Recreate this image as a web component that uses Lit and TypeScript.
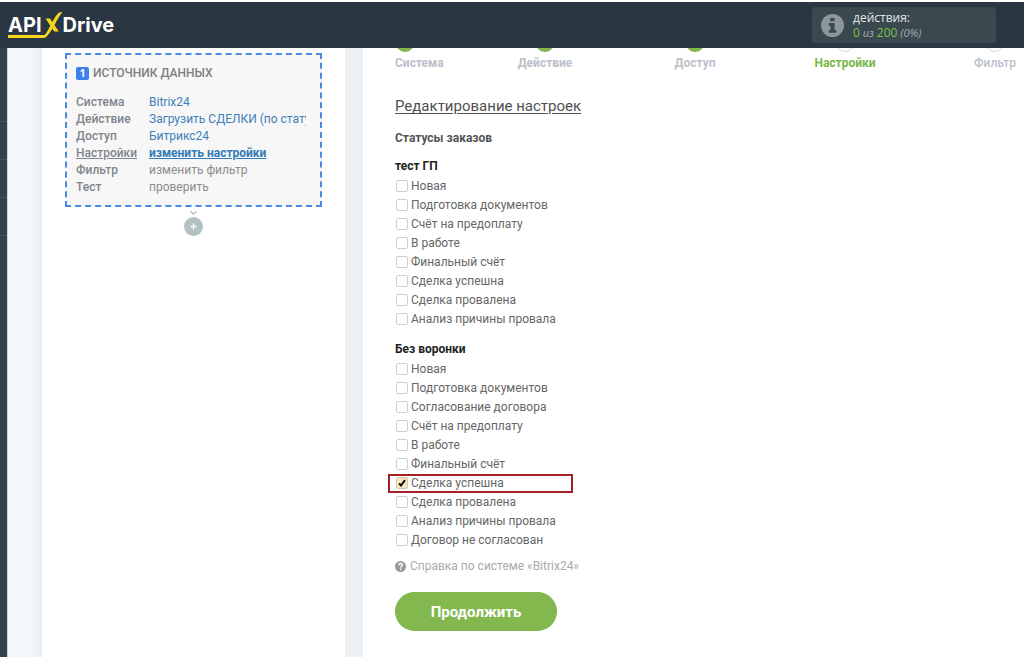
import { LitElement, html, css, svg, nothing } from "lit";
import { customElement, property } from "lit/decorators.js";

interface Status {
  name: string;
  checked?: boolean;
}

interface Pipeline {
  title: string;
  statuses: Status[];
}

const plain = (...names: string[]): Status[] => names.map((name) => ({ name }));

const PIPELINES: Pipeline[] = [
  {
    title: "тест ГП",
    statuses: plain(
      "Новая",
      "Подготовка документов",
      "Счёт на предоплату",
      "В работе",
      "Финальный счёт",
      "Сделка успешна",
      "Сделка провалена",
      "Анализ причины провала"
    ),
  },
  {
    title: "Без воронки",
    statuses: [
      ...plain(
        "Новая",
        "Подготовка документов",
        "Согласование договора",
        "Счёт на предоплату",
        "В работе",
        "Финальный счёт"
      ),
      { name: "Сделка успешна", checked: true },
      ...plain("Сделка провалена", "Анализ причины провала", "Договор не согласован"),
    ],
  },
];

@customElement("app-header")
class AppHeader extends LitElement {
  static styles = css`
    :host {
      display: flex;
      align-items: center;
      justify-content: space-between;
      position: relative;
      z-index: 2;
      height: 46px;
      padding: 0 28px 0 8px;
      box-sizing: border-box;
      background: #2b3643;
      color: #fff;
    }
    .logo {
      display: flex;
      align-items: center;
      color: #fff;
      text-decoration: none;
      font: 700 20px/24px Inter, sans-serif;
    }
    .api {
      position: relative;
    }
    .api::after {
      content: "";
      position: absolute;
      left: 0;
      right: -3px;
      bottom: -1px;
      height: 3px;
      background: #f7d51d;
    }
    .cross {
      width: 21px;
      height: 26px;
      display: block;
    }
    .usage {
      display: flex;
      align-items: center;
      gap: 9px;
      width: 184px;
      height: 36px;
      padding: 0 9px;
      box-sizing: border-box;
      border-radius: 3px;
      background: #3a4850;
      font: 12px/15px "Open Sans", sans-serif;
      color: #e4e7e9;
    }
    .usage svg {
      width: 23px;
      height: 23px;
      flex: none;
    }
    .counts {
      font-size: 11px;
      font-style: italic;
      color: #a3abb0;
    }
    .num {
      font-size: 12px;
      font-style: normal;
      color: #7cc243;
    }
  `;

  render() {
    return html`
      <a class="logo" href="#" aria-label="APIXDrive">
        <span class="api">API</span>
        <svg class="cross" viewBox="0 0 21 26" aria-hidden="true">
          <path d="M3.600 6.500H8L16.800 19.500H12.200Z" fill="#f7d51d" />
          <path d="M.5 25.500C4 22 6.500 17 9 12.500 11.500 8 14 3 16.500 1 18 0 20.500.3 20.500.3 18 3 15.500 7.500 13 12 10 17.500 7 22.500 3.500 25.500Z" fill="#f7d51d" />
        </svg>
        <span>Drive</span>
      </a>
      <div class="usage">
        <svg viewBox="0 0 23 23" aria-hidden="true">
          <circle cx="11.500" cy="11.500" r="11.500" fill="#8d969b" />
          <path d="M9.300 4h4.200v3.300H9.300ZM7.800 9h5.700v7h1.700v2.700H7.800V16h1.700v-4.300H7.800Z" fill="#3a4850" />
        </svg>
        <div>
          <div>действия:</div>
          <div class="counts"><span class="num">0</span> из <span class="num">200</span> (0%)</div>
        </div>
      </div>
    `;
  }
}

@customElement("source-card")
class SourceCard extends LitElement {
  static styles = css`
    :host {
      display: block;
    }
    .card {
      padding: 9px 14px 9px 9px;
      border: 2px dashed #4a8be0;
      background: #f7f7f7;
    }
    .title {
      display: flex;
      align-items: center;
      gap: 4px;
      margin: 0 0 12px;
      font-size: 12px;
      line-height: 18px;
      font-weight: 500;
      color: #808080;
    }
    .index {
      width: 13px;
      height: 13px;
      border-radius: 2px;
      background: #3b82ee;
      color: #fff;
      font: 700 10px/13px "Open Sans", sans-serif;
      text-align: center;
    }
    .rows {
      display: grid;
      grid-template-columns: 73px 1fr;
      grid-auto-rows: 17px;
      align-items: center;
      margin: 0;
    }
    dt {
      font-weight: 500;
      color: #7f858d;
    }
    dd {
      margin: 0;
      min-width: 0;
      overflow: hidden;
      white-space: nowrap;
      color: #8c8c8c;
    }
    a {
      color: #3f80b8;
      text-decoration: none;
    }
    a.muted {
      color: #8c8c8c;
    }
    a.current {
      font-weight: 700;
      text-decoration: underline;
      color: #337ab7;
    }
    .active {
      text-decoration: underline;
    }
    .after {
      display: flex;
      flex-direction: column;
      align-items: center;
      gap: 2px;
      padding-top: 4px;
    }
    .after svg {
      display: block;
    }
    .add {
      display: grid;
      place-items: center;
      width: 19px;
      height: 19px;
      padding: 0;
      border: 0;
      border-radius: 50%;
      background: #b2c2c2;
    }
  `;

  render() {
    return html`
      <section class="card">
        <h2 class="title"><span class="index">1</span>ИСТОЧНИК ДАННЫХ</h2>
        <dl class="rows">
          <dt>Система</dt>
          <dd><a href="#">Bitrix24</a></dd>
          <dt>Действие</dt>
          <dd><a href="#">Загрузить СДЕЛКИ (по статусам)</a></dd>
          <dt>Доступ</dt>
          <dd><a href="#">Битрикс24</a></dd>
          <dt class="active">Настройки</dt>
          <dd><a class="current" href="#">изменить настройки</a></dd>
          <dt>Фильтр</dt>
          <dd><a class="muted" href="#">изменить фильтр</a></dd>
          <dt>Тест</dt>
          <dd><a class="muted" href="#">проверить</a></dd>
        </dl>
      </section>
      <div class="after">
        <svg width="7" height="4" viewBox="0 0 7 4" aria-hidden="true">
          <path d="M.5.500 3.500 3 6.500.500" fill="none" stroke="#b2b8b8" stroke-width="1.300" />
        </svg>
        <button class="add" aria-label="Добавить">
          <svg width="7" height="7" viewBox="0 0 7 7"><path d="M3.500 .5v6M.5 3.500h6" stroke="#fff" stroke-width="1.300" /></svg>
        </button>
      </div>
    `;
  }
}

@customElement("step-bar")
class StepBar extends LitElement {
  static steps = [
    { name: "Система", state: "done" },
    { name: "Действие", state: "done" },
    { name: "Доступ", state: "done" },
    { name: "Настройки", state: "current" },
    { name: "Фильтр", state: "next" },
  ];

  static styles = css`
    :host {
      display: block;
    }
    .steps {
      display: grid;
      grid-template-columns: 1fr repeat(4, 2fr);
      margin: 0;
      padding: 0;
      list-style: none;
    }
    .step {
      display: flex;
      flex-direction: column;
      align-items: center;
      gap: 3px;
      line-height: 16px;
      font-weight: 700;
      color: #bac1c9;
    }
    .step:first-child {
      align-items: flex-start;
    }
    .dot {
      width: 20px;
      height: 20px;
      box-sizing: border-box;
      border-radius: 50%;
      border: 1px solid #d5d8dc;
      background: #fff;
    }
    .done .dot {
      border-color: #82b84e;
      background: #82b84e;
    }
    .current {
      color: #7ab648;
    }
    .next {
      font-weight: 500;
    }
  `;

  render() {
    return html`<ol class="steps">
      ${StepBar.steps.map(
        (s) => html`<li class="step ${s.state}"><span class="dot"></span>${s.name}</li>`
      )}
    </ol>`;
  }
}

@customElement("status-group")
class StatusGroup extends LitElement {
  @property({ attribute: false }) group!: Pipeline;

  static styles = css`
    :host {
      display: block;
    }
    .group {
      margin: 0;
      padding: 0;
      border: 0;
      min-width: 0;
    }
    legend {
      padding: 0;
      margin-bottom: 2px;
      line-height: 18px;
      font-weight: 700;
      color: #222;
    }
    .option {
      display: flex;
      align-items: center;
      gap: 3px;
      width: 185px;
      height: 19px;
      margin-left: -7px;
      padding-left: 8px;
      box-sizing: border-box;
      white-space: nowrap;
    }
    .option.marked {
      outline: 2px solid #a52025;
      outline-offset: -2px;
    }
    .box {
      display: grid;
      place-items: center;
      margin-bottom: 2px;
    }
    .box > * {
      grid-area: 1 / 1;
    }
    .box svg {
      position: relative;
      pointer-events: none;
    }
    input {
      appearance: none;
      width: 12px;
      height: 12px;
      margin: 0;
      box-sizing: border-box;
      border: 1px solid #cfcfcf;
      border-radius: 2px;
      background: #fff;
    }
    input:checked {
      border-color: #d6c9a8;
      background: #f8e6c0;
    }
  `;

  render() {
    return html`<fieldset class="group">
      <legend>${this.group.title}</legend>
      ${this.group.statuses.map(
        (s) => html`<label class="option ${s.checked ? "marked" : ""}">
          <span class="box">
            <input type="checkbox" .checked=${!!s.checked} />
            ${s.checked
              ? html`<svg width="8" height="8" viewBox="0 0 8 8" aria-hidden="true">
                  ${svg`<path d="M1 4.300 3 6.500 7 1.200" fill="none" stroke="#111" stroke-width="2" />`}
                </svg>`
              : nothing}
          </span>
          ${s.name}
        </label>`
      )}
    </fieldset>`;
  }
}

@customElement("app-root")
class AppRoot extends LitElement {
  static styles = css`
    :host {
      display: flex;
      flex-direction: column;
      height: 100vh;
      padding-top: 2px;
      box-sizing: border-box;
      overflow: hidden;
      background: #fff;
      font: 12px/17px Roboto, sans-serif;
      color: #666;
    }
    .body {
      flex: 1;
      min-height: 0;
      display: grid;
      grid-template-columns: 7px 35px 303px 18px 1fr;
      background: #edf1f3;
    }
    .rail {
      padding-top: 36px;
      background: #364150;
    }
    .rail span {
      display: block;
      height: 37px;
      border-bottom: 1px solid #465364;
    }
    .gutter {
      background: linear-gradient(90deg, #f3f8fa 60%, #e9edef);
      border-left: 1px solid #cdd6dc;
      box-sizing: border-box;
    }
    .source {
      padding: 5px 23px 0;
      background: #fff;
    }
    .settings {
      min-width: 0;
      padding-left: 32px;
      background: #fff;
    }
    step-bar {
      margin: -16px -46px 0 0;
    }
    h1 {
      margin: 24px 0 0;
      font-size: 15px;
      line-height: 22px;
      font-weight: 400;
      text-decoration: underline;
      text-underline-offset: 2px;
      color: #505050;
    }
    h2 {
      margin: 12px 0 10px;
      font-size: 12px;
      line-height: 18px;
      font-weight: 700;
      color: #555;
    }
    status-group + status-group {
      margin-top: 11px;
    }
    .help {
      display: flex;
      align-items: center;
      gap: 4px;
      width: max-content;
      margin-top: 8px;
      color: #aaa;
      text-decoration: none;
    }
    .go {
      display: block;
      margin-top: 17px;
      width: 162px;
      height: 39px;
      border: 0;
      border-radius: 20px;
      background: #82b84e;
      color: #fff;
      font: 700 15px/20px Roboto, sans-serif;
    }
  `;

  render() {
    return html`
      <app-header></app-header>
      <div class="body">
        <nav class="rail"><span></span><span></span><span></span><span></span></nav>
        <div class="gutter"></div>
        <aside class="source"><source-card></source-card></aside>
        <div></div>
        <main class="settings">
          <step-bar></step-bar>
          <h1>Редактирование настроек</h1>
          <h2>Статусы заказов</h2>
          ${PIPELINES.map((p) => html`<status-group .group=${p}></status-group>`)}
          <a class="help" href="#">
            <svg width="11" height="11" viewBox="0 0 11 11" aria-hidden="true">
              <circle cx="5.500" cy="5.500" r="5.500" fill="#999" />
              <path d="M3.700 4.200Q3.800 2.500 5.500 2.500T7.300 4.100Q7.300 5 6.300 5.500 5.600 5.900 5.600 6.600M5.600 7.500v1.400" fill="none" stroke="#fff" stroke-width="1.400" />
            </svg>
            Справка по системе «Bitrix24»
          </a>
          <button class="go">Продолжить</button>
        </main>
      </div>
    `;
  }
}
